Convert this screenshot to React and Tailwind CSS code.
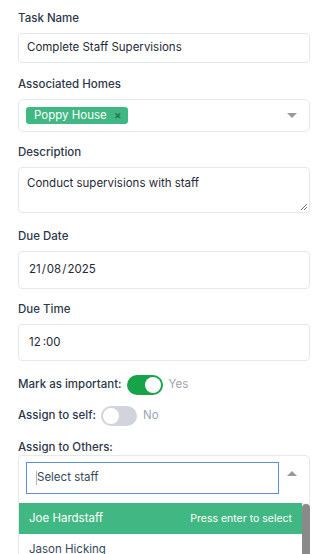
import React from "react";

function Label({ children, className = "" }) {
  return <div className={`text-[11.5px] font-medium text-[#2d3748] leading-[16px] ${className}`}>{children}</div>;
}

function Toggle({ on }) {
  return (
    <div className={`w-[36px] h-[20px] rounded-full flex items-center px-[2px] ${on ? "bg-[#16a34a] justify-end" : "bg-[#d1d5db] justify-start"}`}>
      <div className="w-[16px] h-[16px] rounded-full bg-white" />
    </div>
  );
}

export default function App() {
  return (
    <div className="w-[327px] h-[554px] overflow-hidden bg-white pl-[18px] pr-[17px] pt-[10px] text-[#2d3748]" style={{ fontFamily: "Inter, 'Noto Sans', sans-serif" }}>
      <Label>Task Name</Label>
      <div className="mt-[7px] h-[30px] border border-[#e2e8f0] rounded-[4px] flex items-center px-[8px] text-[11.5px] text-[#1f2937]">
        Complete Staff Supervisions
      </div>

      <Label className="mt-[13px]">Associated Homes</Label>
      <div className="mt-[7px] h-[33px] border border-[#e2e8f0] rounded-[5px] flex items-center pl-[7px] pr-[12px]">
        <div className="h-[17px] bg-[#41b883] rounded-[3px] flex items-center pl-[8px] pr-[6px] text-white text-[11.5px]">
          Poppy House
          <span className="ml-[7px] text-[#266d4d] text-[9px] font-bold leading-none">✕</span>
        </div>
        <div className="flex-1" />
        <svg width="10" height="5" viewBox="0 0 10 5"><path d="M0 0 L10 0 L5 5 Z" fill="#999" /></svg>
      </div>

      <Label className="mt-[12px]">Description</Label>
      <div className="relative mt-[7px] h-[46px] border border-[#e2e8f0] rounded-[4px] px-[8px] pt-[7px] text-[11.5px] text-[#1f2937] leading-[16px]">
        Conduct supervisions with staff
        <svg className="absolute right-[2px] bottom-[2px]" width="6" height="6" viewBox="0 0 6 6">
          <path d="M6 0 L0 6 M6 3 L3 6" stroke="#777" strokeWidth="1" />
        </svg>
      </div>

      <Label className="mt-[15px]">Due Date</Label>
      <div className="mt-[7px] h-[38px] border border-[#e2e8f0] rounded-[4px] flex items-center px-[10px] text-[11.5px] text-[#1f2937]">
        <span>21</span><span className="mx-[1px]">/</span><span>08</span><span className="mx-[1px]">/</span><span>2025</span>
      </div>

      <Label className="mt-[12px]">Due Time</Label>
      <div className="mt-[7px] h-[37px] border border-[#e2e8f0] rounded-[4px] flex items-center px-[10px] text-[11.5px] text-[#1f2937]">
        <span>12</span><span className="ml-[2px]">:00</span>
      </div>

      <div className="mt-[14px] flex items-center h-[20px]">
        <span className="text-[11.5px] font-medium text-[#2d3748] mr-[5px]">Mark as important:</span>
        <Toggle on />
        <span className="ml-[6px] text-[11.5px] text-[#9ca3af]">Yes</span>
      </div>
      <div className="mt-[11px] flex items-center h-[20px]">
        <span className="text-[11.5px] font-medium text-[#2d3748] mr-[5px]">Assign to self:</span>
        <Toggle />
        <span className="ml-[6px] text-[11.5px] text-[#9ca3af]">No</span>
      </div>

      <Label className="mt-[13px]">Assign to Others:</Label>
      <div className="border border-[#e8e8e8] border-b-0 rounded-t-[5px] h-[48px] flex items-start pl-[7px] pt-[6px] pr-[12px]">
        <div className="w-[253px] h-[32px] border-[1.5px] border-[#5b8fd8] flex items-center pl-[9px] text-[11.5px] text-[#35495e]">
          <span className="w-px h-[14px] bg-[#35495e] opacity-40" />Select staff
        </div>
        <div className="flex-1" />
        <svg className="mt-[9px]" width="10" height="5" viewBox="0 0 10 5"><path d="M0 5 L10 5 L5 0 Z" fill="#999" /></svg>
      </div>
      <div className="flex">
        <div className="flex-1 border-l border-[#e8e8e8]">
          <div className="h-[31px] bg-[#41b883] text-white text-[11.5px] flex items-center justify-between px-[10px]">
            <span>Joe Hardstaff</span>
            <span className="text-[10.5px]">Press enter to select</span>
          </div>
          <div className="h-[31px] text-[#35495e] text-[11.5px] flex items-center px-[10px]">Jason Hicking</div>
        </div>
        <div className="w-[8px] bg-[#f1f1f1] pt-[1px]">
          <div className="w-[8px] h-[80px] rounded-full bg-[#8a8a8a]" />
        </div>
      </div>
    </div>
  );
}
